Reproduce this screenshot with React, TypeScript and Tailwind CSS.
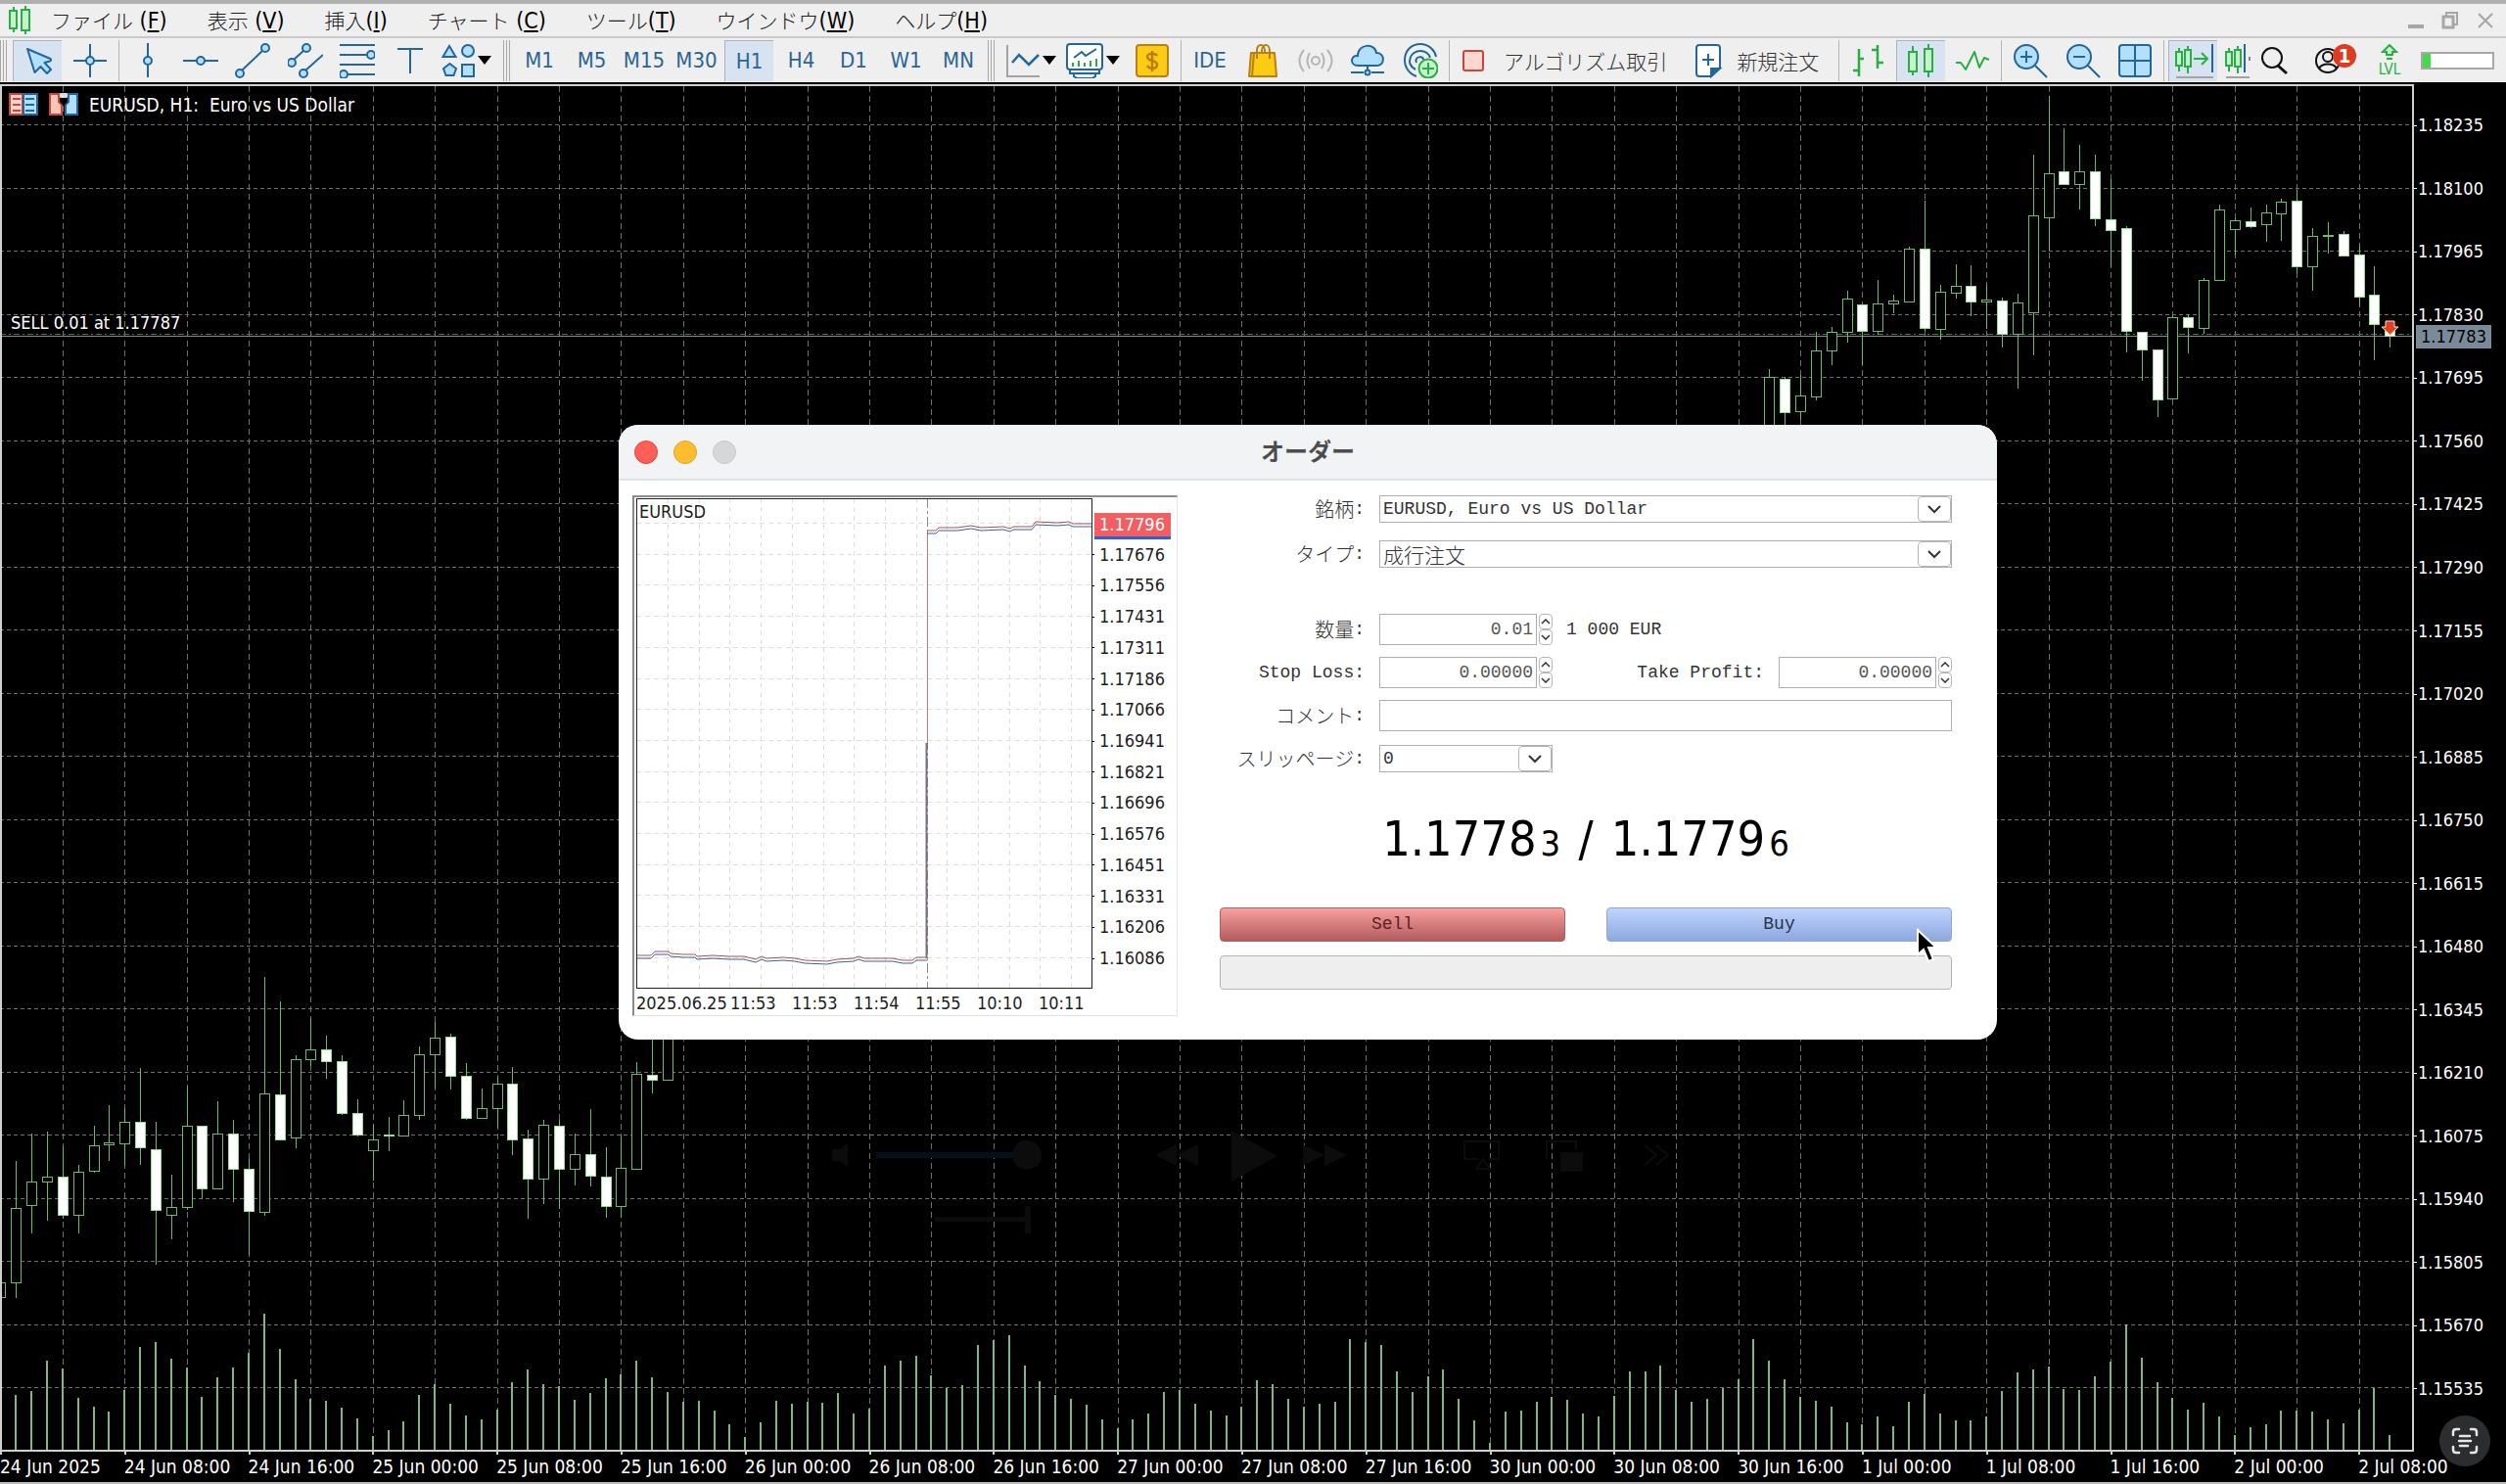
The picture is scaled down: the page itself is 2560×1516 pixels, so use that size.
import React, { useId, useState } from "react";

const UI = "font-['DejaVu_Sans_Condensed','Noto_Sans','Noto_Sans_CJK_JP',sans-serif]";
const JP = "font-['Noto_Sans_CJK_JP',sans-serif] font-light";
const MONO = "font-['Liberation_Mono','Noto_Sans_CJK_JP',monospace]";

const BLUE = "#22679c";
const SKY = "#b2e0fb";
const GREEN = "#27ae45";
const MINT = "#c5f2cb";

/* ---------- chart data: [bar, high, body top, body bottom, low, filled] ---------- */
const CANDLES: number[][] = [
  [0, 1310, 1310, 1325, 1325, 0], [1, 1186, 1234, 1310, 1326, 0], [2, 1158, 1207, 1231, 1260, 0],
  [3, 1156, 1202, 1207, 1247, 0], [4, 1171, 1202, 1241, 1245, 1], [5, 1190, 1197, 1241, 1260, 0],
  [6, 1150, 1170, 1196, 1198, 0], [7, 1129, 1167, 1169, 1186, 0], [8, 1132, 1146, 1168, 1191, 0],
  [9, 1091, 1146, 1172, 1190, 1], [10, 1146, 1174, 1236, 1292, 1], [11, 1200, 1233, 1241, 1266, 0],
  [12, 1110, 1150, 1233, 1236, 0], [13, 1150, 1150, 1214, 1225, 1], [14, 1125, 1158, 1214, 1214, 0],
  [15, 1144, 1158, 1194, 1228, 1], [16, 1184, 1194, 1237, 1282, 1], [17, 998, 1117, 1238, 1242, 0],
  [18, 1023, 1118, 1164, 1165, 1], [19, 1078, 1082, 1162, 1173, 0], [20, 1040, 1072, 1082, 1089, 0],
  [21, 1058, 1072, 1084, 1102, 1], [22, 1078, 1084, 1137, 1139, 1], [23, 1123, 1137, 1159, 1161, 1],
  [24, 1149, 1164, 1175, 1206, 0], [25, 1141, 1159, 1160, 1176, 1], [26, 1124, 1139, 1160, 1160, 0],
  [27, 1069, 1077, 1139, 1144, 0], [28, 1044, 1060, 1077, 1112, 0], [29, 1056, 1059, 1099, 1113, 1],
  [30, 1086, 1099, 1142, 1144, 1], [31, 1112, 1132, 1142, 1142, 0], [32, 1100, 1107, 1132, 1152, 0],
  [33, 1090, 1107, 1164, 1180, 1], [34, 1154, 1163, 1204, 1245, 1], [35, 1144, 1149, 1204, 1230, 0],
  [36, 1144, 1150, 1194, 1235, 1], [37, 1158, 1179, 1194, 1211, 0], [38, 1133, 1179, 1201, 1212, 1],
  [39, 1172, 1202, 1232, 1244, 1], [40, 1161, 1193, 1232, 1244, 0], [41, 1085, 1097, 1194, 1194, 0],
  [42, 1040, 1098, 1103, 1117, 1], [43, 1040, 1040, 1103, 1103, 0],
  [114, 377, 385, 460, 460, 0], [115, 385, 387, 421, 434, 1], [116, 383, 404, 420, 429, 0],
  [117, 339, 358, 405, 409, 0], [118, 334, 339, 358, 373, 0], [119, 297, 305, 339, 350, 0],
  [120, 310, 311, 338, 373, 1], [121, 286, 310, 338, 342, 0], [122, 301, 307, 310, 320, 0],
  [123, 252, 254, 308, 308, 0], [124, 205, 254, 335, 338, 1], [125, 291, 298, 336, 347, 0],
  [126, 270, 292, 299, 305, 0], [127, 271, 292, 308, 323, 1], [128, 291, 306, 308, 336, 0],
  [129, 304, 307, 341, 355, 1], [130, 300, 309, 341, 397, 0], [131, 158, 220, 319, 363, 0],
  [132, 98, 177, 222, 256, 0], [133, 131, 175, 188, 189, 1], [134, 148, 175, 188, 214, 0],
  [135, 158, 175, 223, 231, 1], [136, 183, 224, 235, 273, 1], [137, 231, 233, 338, 360, 1],
  [138, 339, 339, 357, 389, 1], [139, 357, 357, 408, 426, 1], [140, 322, 324, 407, 407, 0],
  [141, 321, 324, 334, 361, 1], [142, 284, 286, 335, 341, 0], [143, 209, 214, 286, 286, 0],
  [144, 223, 225, 234, 261, 0], [145, 212, 226, 231, 233, 1], [146, 209, 217, 229, 247, 0],
  [147, 203, 206, 218, 246, 0], [148, 194, 205, 272, 279, 1], [149, 233, 241, 272, 297, 0],
  [150, 227, 240, 241, 259, 0], [151, 236, 239, 261, 261, 1], [152, 250, 260, 303, 313, 1],
  [153, 272, 301, 331, 368, 1], [154, 333, 333, 343, 355, 1],
];

/* top of each volume bar, starting with bar 1 */
const VOLUMES = [
  1425, 1421, 1390, 1398, 1428, 1437, 1442, 1420, 1376, 1371, 1388, 1397, 1427, 1407, 1397, 1382, 1342, 1378, 1409, 1429,
  1431, 1438, 1449, 1467, 1461, 1452, 1425, 1414, 1434, 1446, 1450, 1440, 1412, 1399, 1414, 1416, 1430, 1423, 1408, 1404,
  1390, 1407, 1422, 1432, 1431, 1441, 1455, 1468, 1453, 1431, 1434, 1432, 1433, 1423, 1444, 1439, 1395, 1390, 1385, 1405,
  1418, 1415, 1374, 1369, 1364, 1395, 1411, 1425, 1429, 1435, 1450, 1459, 1450, 1444, 1422, 1420, 1434, 1441, 1446, 1437,
  1410, 1414, 1429, 1437, 1434, 1432, 1368, 1371, 1374, 1401, 1422, 1406, 1399, 1429, 1451, 1474, 1442, 1441, 1432, 1427,
  1430, 1444, 1447, 1426, 1401, 1401, 1395, 1420, 1432, 1429, 1418, 1409, 1368, 1390, 1409, 1427, 1431, 1437, 1453, 1455,
  1447, 1457, 1432, 1424, 1444, 1451, 1451, 1447, 1421, 1402, 1399, 1396, 1419, 1420, 1406, 1391, 1353, 1387, 1412, 1428,
  1440, 1433, 1447, 1466, 1458, 1455, 1441, 1441, 1442, 1450, 1454, 1440, 1418, 1466,
];

const TIMES = [
  "24 Jun 2025", "24 Jun 08:00", "24 Jun 16:00", "25 Jun 00:00", "25 Jun 08:00", "25 Jun 16:00", "26 Jun 00:00",
  "26 Jun 08:00", "26 Jun 16:00", "27 Jun 00:00", "27 Jun 08:00", "27 Jun 16:00", "30 Jun 00:00", "30 Jun 08:00",
  "30 Jun 16:00", "1 Jul 00:00", "1 Jul 08:00", "1 Jul 16:00", "2 Jul 00:00", "2 Jul 08:00",
];

const PRICES = Array.from({ length: 21 }, (_, i) => ((118235 - i * 135) / 100000).toFixed(5));

const TICK_PRICES = [
  "1.17676", "1.17556", "1.17431", "1.17311", "1.17186", "1.17066", "1.16941",
  "1.16821", "1.16696", "1.16576", "1.16451", "1.16331", "1.16206", "1.16086",
];

const barX = (i: number) => Math.round(0.4 + 15.85 * i);

/* ---------- icons ---------- */
function Icon({ children, w = 36, color = BLUE }: { children: React.ReactNode; w?: number; color?: string }) {
  return (
    <svg width={w} height={36} viewBox={`0 0 ${w} 36`} fill="none" stroke={color} strokeWidth={2} className="shrink-0" aria-hidden="true">
      {children}
    </svg>
  );
}

const Caret = () => (
  <svg width={14} height={9} viewBox="0 0 14 9" className="shrink-0" aria-hidden="true">
    <path d="M0 0H14L7 9Z" fill="#000" />
  </svg>
);

const CursorIcon = () => (
  <Icon><path d="M7 6L30.500 16Q32 17.500 30 18.500L24.500 20L31 27L27 31L20.500 24L14.500 30Z" fill={SKY} strokeLinejoin="round" /></Icon>
);
const CrossIcon = () => (
  <Icon><path d="M18 1V14M18 22V35M1 18H14M22 18H35" /><circle cx="18" cy="18" r="4" fill={SKY} /></Icon>
);
const VLineIcon = () => (
  <Icon><path d="M18 0V14M18 22V35" /><circle cx="18" cy="18" r="4" fill={SKY} /></Icon>
);
const HLineIcon = () => (
  <Icon><path d="M0 18H14M22 18H36" /><circle cx="18" cy="18" r="4" fill={SKY} /></Icon>
);
const TrendIcon = () => (
  <Icon><path d="M7 28L29 7" /><circle cx="31" cy="5" r="4" fill={SKY} /><circle cx="5" cy="31" r="4" fill={SKY} /></Icon>
);
const ChannelIcon = () => (
  <Icon>
    <path d="M6 17L17 7M18 28L36 12" /><circle cx="19" cy="5" r="4" fill={SKY} />
    <circle cx="4" cy="20" r="4" fill={SKY} /><circle cx="16" cy="31" r="4" fill={SKY} />
  </Icon>
);
const FiboIcon = () => (
  <Icon>
    <path d="M0 2H36M0 12H28M0 22H36M8 32H36" /><circle cx="32" cy="12" r="4" fill={SKY} /><circle cx="4" cy="32" r="4" fill={SKY} />
  </Icon>
);
const TextIcon = () => <Icon><path d="M5 6H31M18 6V31" /></Icon>;
const ShapesIcon = () => (
  <Icon w={34}>
    <path d="M8 3L14.500 14H1.500Z" fill={SKY} /><circle cx="27" cy="8" r="6" fill={SKY} />
    <path d="M8.500 21L15 26L12.500 33H4.500L2 26Z" fill={SKY} /><rect x="21" y="22" width="12" height="12" fill={SKY} />
  </Icon>
);
const AxesIcon = () => (
  <Icon w={34}><path d="M1 2V34H34" stroke="#a3a3a3" /><path d="M6 20L13 12L23 22L33 12" strokeWidth={2.500} /></Icon>
);
const IndicatorIcon = () => (
  <Icon w={38}>
    <path d="M4 28V31H34V28M8 31V34L11 36H27L30 34V31" />
    <rect x="1" y="1" width="36" height="26" rx="3" fill="#fff" />
    <path d="M8 15L16 9L20 13L31 6" /><path d="M7 24V20M13 24V18M19 24V20M25 24V18M31 24V16" stroke={GREEN} />
  </Icon>
);
const DollarIcon = () => (
  <Icon w={34} color="#b97f10">
    <rect x="1" y="2" width="32" height="32" rx="3" fill="#fccb13" />
    <path d="M22 13C20 10 12 10 12 14C12 19 22 17 22 22C22 27 14 27 12 23M17 8V29" strokeWidth={2.500} />
  </Icon>
);
const BagIcon = () => (
  <Icon color="#b97f10">
    <path d="M6 10H30L32 34H4Z" fill="#fccb13" strokeLinejoin="round" />
    <path d="M9 10L7 34M12 16V8C12 0 20 0 20 8V10M17 10V8C17 0 25 0 25 8V16" />
  </Icon>
);
const SignalIcon = () => (
  <Icon color="#b5b5b5">
    <circle cx="18" cy="18" r="4" /><path d="M12 10Q7 18 12 26M24 10Q29 18 24 26M6 7Q-3 18 6 29M30 7Q39 18 30 29" />
  </Icon>
);
const CloudIcon = () => (
  <Icon>
    <path d="M8 23C0 23 0 12 8 13C8 0 26 0 27 10C36 10 36 23 28 23Z" fill={SKY} /><path d="M18 23V28M1 30H14M22 30H35" />
    <circle cx="18" cy="30" r="2.500" fill={SKY} />
  </Icon>
);
const RadarIcon = () => (
  <Icon>
    <path d="M14 34C-4 28 -1 1 18 1C27 1 33 8 34 14M13 27C2 21 8 8 18 8C23 8 27 11 28 15M14 20C11 14 21 12 21 17" />
    <circle cx="26" cy="26" r="9.500" fill={MINT} stroke={GREEN} /><path d="M26 20V32M20 26H32" stroke={GREEN} />
  </Icon>
);
const StopIcon = () => <Icon w={24} color="#c8463c"><rect x="2" y="8" width="20" height="20" rx="2" fill="#fcd8cf" /></Icon>;
const NewOrderIcon = () => (
  <Icon w={28}>
    <path d="M5 2H23Q26 2 26 5V25L17 34H5Q2 34 2 31V5Q2 2 5 2Z" fill="#fff" /><path d="M17 34V26H26Z" fill={BLUE} />
    <path d="M14 11V23M8 17H20" />
  </Icon>
);
const BarsIcon = () => <Icon color={GREEN}><path d="M9 6V34M3 28H9M9 16H14M28 2V26M22 7H28M28 20H34" strokeWidth={2.500} /></Icon>;
const CandlesIcon = () => (
  <Icon color={GREEN}>
    <path d="M10 3V33M26 1V35" /><rect x="6" y="9" width="8" height="20" fill={MINT} /><rect x="22" y="6" width="8" height="23" fill={MINT} />
  </Icon>
);
const WaveIcon = () => <Icon color={GREEN}><path d="M1 20H6L11 27L20 9L25 25L30 15L35 17" strokeLinejoin="round" /></Icon>;
const ZoomIcon = ({ plus }: { plus?: boolean }) => (
  <Icon><circle cx="14" cy="14" r="12" fill={SKY} /><path d={plus ? "M14 8V20M8 14H20M23 23L35 35" : "M8 14H20M23 23L35 35"} /></Icon>
);
const GridIcon = () => (
  <Icon><rect x="2" y="2" width="32" height="32" rx="3" fill={SKY} /><path d="M18 2V34M2 18H34" /></Icon>
);
const ShiftIcon = () => (
  <Icon w={42} color={GREEN}>
    <path d="M6 5V29M15 3V31M21 16H34M29 10L35 16L29 22" /><rect x="3" y="9" width="6" height="14" fill={MINT} />
    <rect x="12" y="7" width="6" height="17" fill={MINT} /><path d="M40 1V30" stroke={BLUE} /><path d="M3 35H41" stroke="#a3a3a3" />
  </Icon>
);
const AutoScrollIcon = () => (
  <Icon w={28} color={GREEN}>
    <path d="M6 5V29M15 3V31" /><rect x="3" y="9" width="6" height="14" fill={MINT} /><rect x="12" y="7" width="6" height="17" fill={MINT} />
    <path d="M22 1V30" stroke={BLUE} /><path d="M27 14V18" stroke="#888" /><path d="M3 35H27" stroke="#a3a3a3" />
  </Icon>
);
const SearchIcon = () => <Icon w={30} color="#111"><circle cx="13" cy="15" r="10" /><path d="M19 23L28 31" strokeWidth={3} /></Icon>;
const PersonIcon = () => (
  <Icon w={46} color="#111">
    <circle cx="15" cy="18" r="12" /><circle cx="15" cy="14" r="5" /><path d="M6 26C9 20 21 20 24 26" />
    <circle cx="32" cy="13" r="12" fill="#de3b21" stroke="none" />
  </Icon>
);
const LevelIcon = () => (
  <svg width={24} height={18} viewBox="0 0 24 18" fill="none" stroke={GREEN} strokeWidth={2} aria-hidden="true">
    <path d="M12 1L19 8H15V11H9V8H5ZM9 15H15" fill={MINT} />
  </svg>
);

/* ---------- toolbar ---------- */
function Tool({ label, active, children, w = "w-[50px]" }: { label: string; active?: boolean; children: React.ReactNode; w?: string }) {
  return (
    <button
      type="button"
      aria-label={label}
      className={`${w} flex h-[42px] shrink-0 items-center justify-center overflow-hidden ${active ? "border-l border-t border-[#a9b3bd] bg-[#d7e3f0]" : ""}`}
    >
      {children}
    </button>
  );
}
const Sep = () => <div className="h-[42px] w-px shrink-0 bg-[#b4b4b4]" />;
const Grip = () => <div className="h-[42px] w-[7px] shrink-0 border-x border-[#a8a8a8] px-[2px]"><div className="h-full w-px bg-[#a8a8a8]" /></div>;

const MENUS = [
  ["ファイル", "F", " "], ["表示", "V", " "], ["挿入", "I", ""], ["チャート", "C", " "], ["ツール", "T", ""], ["ウインドウ", "W", ""], ["ヘルプ", "H", ""],
];

function MenuBar() {
  return (
    <nav className="flex h-[33px] items-center bg-[#efefef] pl-2 pr-3">
      <svg width={24} height={30} viewBox="0 0 24 30" fill={MINT} stroke={GREEN} strokeWidth={2} aria-hidden="true">
        <path d="M6 1V27M18 0V29" /><rect x="2" y="5" width="7" height="18" /><rect x="14" y="4" width="8" height="21" />
      </svg>
      <ul className="ml-5 flex items-center gap-[41px]">
        {MENUS.map(([jp, key, gap]) => (
          <li key={key}>
            <a href="#" className="flex items-baseline whitespace-pre leading-8 text-black">
              <span className={`${JP} text-[21px] text-[#222]`}>{jp}</span>
              <span className={`${UI} text-[23px]`}>{gap}(<u className="underline-offset-2">{key}</u>)</span>
            </a>
          </li>
        ))}
      </ul>
      <div className="ml-auto flex items-center gap-[18px]">
        <button type="button" aria-label="最小化" className="mt-3 h-1 w-4 bg-[#a6a6a6]" />
        <button type="button" aria-label="元に戻す">
          <svg width={18} height={18} viewBox="0 0 18 18" fill="none" stroke="#a6a6a6" strokeWidth={2}><path d="M5 4V1H16V13H13" /><rect x="2" y="5" width="10" height="11" strokeWidth={3} /></svg>
        </button>
        <button type="button" aria-label="閉じる">
          <svg width={18} height={18} viewBox="0 0 18 18" stroke="#a6a6a6" strokeWidth={2}><path d="M2 2L16 16M16 2L2 16" /></svg>
        </button>
      </div>
    </nav>
  );
}

function Toolbar() {
  return (
    <div className={`${UI} flex h-[47px] items-center border-t-2 border-[#c9c9c9] bg-[#efefef] pr-3 text-[22px] text-[#2a6595]`}>
      <Grip />
      <div className="ml-[6px] mr-1 flex w-[104px] shrink-0 justify-between">
        <Tool label="カーソル" active><CursorIcon /></Tool>
        <Tool label="十字線"><CrossIcon /></Tool>
      </div>
      <Sep />
      <div className="ml-1 flex w-[318px] shrink-0 justify-between">
        <Tool label="垂直線"><VLineIcon /></Tool>
        <Tool label="水平線"><HLineIcon /></Tool>
        <Tool label="トレンドライン"><TrendIcon /></Tool>
        <Tool label="チャネル"><ChannelIcon /></Tool>
        <Tool label="フィボナッチ"><FiboIcon /></Tool>
        <Tool label="テキスト"><TextIcon /></Tool>
      </div>
      <button type="button" aria-label="図形" className="ml-[7px] mr-3 flex shrink-0 items-center gap-[3px]"><ShapesIcon /><Caret /></button>
      <Grip />
      <div className="mx-[5px] flex w-[478px] shrink-0 justify-between">
        {["M1", "M5", "M15", "M30", "H1", "H4", "D1", "W1", "MN"].map((t) => (
          <Tool key={t} label={t} active={t === "H1"}>{t}</Tool>
        ))}
      </div>
      <Grip />
      <button type="button" aria-label="チャート種類" className="ml-3 flex shrink-0 items-center gap-[3px]"><AxesIcon /><Caret /></button>
      <button type="button" aria-label="インディケータ" className="ml-[10px] flex shrink-0 items-center gap-[3px]"><IndicatorIcon /><Caret /></button>
      <button type="button" aria-label="取引" className="ml-4 mr-3 shrink-0"><DollarIcon /></button>
      <Sep />
      <div className="mx-1 flex w-[265px] shrink-0 justify-between">
        <Tool label="IDE">IDE</Tool>
        <Tool label="マーケット"><BagIcon /></Tool>
        <Tool label="シグナル"><SignalIcon /></Tool>
        <Tool label="VPS"><CloudIcon /></Tool>
        <Tool label="コミュニティ"><RadarIcon /></Tool>
      </div>
      <Sep />
      <button type="button" className={`${JP} ml-3 flex shrink-0 items-center gap-[19px] whitespace-nowrap text-[21px] leading-8 text-[#333]`}>
        <StopIcon />アルゴリズム取引
      </button>
      <button type="button" className={`${JP} ml-7 mr-5 flex shrink-0 items-center gap-[15px] whitespace-nowrap text-[21px] leading-8 text-[#333]`}>
        <NewOrderIcon />新規注文
      </button>
      <Sep />
      <div className="mx-1 flex w-[157px] shrink-0 justify-between">
        <Tool label="バー"><BarsIcon /></Tool>
        <Tool label="ローソク足" active><CandlesIcon /></Tool>
        <Tool label="ライン"><WaveIcon /></Tool>
      </div>
      <Sep />
      <div className="mx-1 flex w-[157px] shrink-0 justify-between">
        <Tool label="拡大"><ZoomIcon plus /></Tool>
        <Tool label="縮小"><ZoomIcon /></Tool>
        <Tool label="並べる"><GridIcon /></Tool>
      </div>
      <Sep />
      <div className="ml-1 flex shrink-0 gap-[5px]">
        <Tool label="チャートシフト" active><ShiftIcon /></Tool>
        <Tool label="自動スクロール" w="w-[30px]"><AutoScrollIcon /></Tool>
      </div>
      <button type="button" aria-label="検索" className="ml-2 shrink-0"><SearchIcon /></button>
      <div className="ml-auto flex shrink-0 items-center gap-5">
        <button type="button" aria-label="アカウント" className="relative">
          <PersonIcon />
          <span className="absolute right-[2px] top-0 flex h-[26px] w-6 items-center justify-center text-[20px] font-bold text-white">1</span>
        </button>
        <button type="button" className="flex flex-col items-center text-[15px] leading-4 text-[#27ae45]"><LevelIcon />LVL</button>
        <div role="img" aria-label="接続状態" className="h-[18px] w-[75px] border-2 border-[#a8a8a8] bg-white"><div className="h-full w-2 bg-[#46d94a]" /></div>
      </div>
    </div>
  );
}

/* ---------- main chart ---------- */
function Plot() {
  return (
    <svg viewBox="0 86 2466 1397" preserveAspectRatio="none" className="h-full min-w-0 flex-1" shapeRendering="crispEdges" role="img" aria-label="EURUSD H1">
      <g stroke="#6f6f6f" strokeWidth={1}>
        {PRICES.map((p, i) => (
          <line key={p} x1={0} x2={2466} y1={Math.round(127 + i * 64.5) + 0.5} y2={Math.round(127 + i * 64.5) + 0.5} strokeDasharray="4 3" />
        ))}
        {Array.from({ length: 38 }, (_, i) => barX((i + 1) * 4) + 0.5).map((x) => (
          <line key={x} x1={x} x2={x} y1={88} y2={1482} strokeDasharray="6 4" />
        ))}
      </g>
      <g fill="#0c0c0c" shapeRendering="auto">
        <path d="M850 1174H858L866 1168V1192L858 1186H850Z" />
        <rect x="895" y="1177" width="145" height="6" fill="#04101a" />
        <circle cx="1049" cy="1180" r="15" />
        <path d="M1180 1180L1202 1169V1191ZM1202 1180L1224 1169V1191ZM1258 1155L1305 1181L1258 1207ZM1331 1169L1353 1180L1331 1191ZM1353 1169L1376 1180L1353 1191Z" />
        <path d="M1594 1177H1617V1197H1594Z" />
        <path d="M1510 1184H1496V1166H1531V1184H1520M1515 1184L1508 1194H1522ZM1580 1184V1166H1610V1174M1680 1170L1692 1180L1680 1190M1692 1170L1704 1180L1692 1190" fill="none" stroke="#0c0c0c" strokeWidth={2} />
        <rect x="955" y="1243" width="95" height="5" /><rect x="1047" y="1232" width="6" height="28" />
      </g>
      <g fill="#7fb587">
        {VOLUMES.map((y, i) => <rect key={i} x={barX(i + 1) - 1} y={y} width={2} height={1482 - y} />)}
      </g>
      <line x1={0} x2={2466} y1={341.5} y2={341.5} stroke="#3d7a45" strokeDasharray="6 3 2 3" />
      <line x1={0} x2={2466} y1={343} y2={343} stroke="#7e8b8f" strokeWidth={1} />
      {CANDLES.map(([i, hi, top, bot, lo, filled]) => {
        const x = barX(i);
        return (
          <g key={i} stroke="#67bd68" strokeWidth={1}>
            <path d={`M${x + 0.5} ${hi}V${top}M${x + 0.5} ${bot}V${lo}`} />
            <rect x={x - 4.5} y={top + 0.5} width={10} height={Math.max(bot - top, 1)} fill={filled ? "#fff" : "#000"} stroke={filled ? "#8fe08f" : "#67bd68"} />
          </g>
        );
      })}
      <path d="M2437 328H2446V334H2450L2441.500 342L2433 334H2437Z" fill="#e0401f" stroke="#ffd9c9" shapeRendering="auto" />
      <path d="M0 87H2465V1482H0M1 87V1482" fill="none" stroke="#d0d0d0" strokeWidth={2} />
    </svg>
  );
}

function ChartWindow() {
  return (
    <section className={`${UI} relative flex min-h-0 flex-1 flex-col border-b-2 border-[#bdbdbd] bg-black pt-[2px] text-[18px] leading-6 text-white`}>
      <div className="flex min-h-0 flex-1">
        <Plot />
        <ol className="relative flex w-[94px] shrink-0 flex-col pb-8 pt-[10px]">
          {PRICES.map((p) => (
            <li key={p} className="flex flex-1 items-center"><span className="mr-px h-px w-[3px] bg-white" />{p}</li>
          ))}
          <li className="absolute left-[2px] top-[246px] w-[77px] bg-[#7b8a99] text-center text-black">1.17783</li>
        </ol>
      </div>
      <ol className="flex h-[31px] shrink-0 pr-6 text-[19px]">
        {TIMES.map((t) => (
          <li key={t} className="min-w-0 flex-1 basis-0 whitespace-nowrap"><div className="h-[3px] w-[2px] bg-[#d0d0d0]" />{t}</li>
        ))}
      </ol>
      <header className="absolute left-[9px] top-[11px] flex items-center gap-[11px] whitespace-pre">
        <svg width={30} height={24} viewBox="0 0 30 24" aria-hidden="true">
          <rect x="1" y="1" width="13" height="21" fill="#fbd5cd" stroke="#c8463c" strokeWidth="2" /><rect x="15" y="1" width="14" height="21" fill={SKY} stroke={BLUE} strokeWidth="2" />
          <path d="M4 6H12M4 12H12M4 18H12" stroke="#c8463c" strokeWidth="2" /><path d="M17 6H26M17 12H26M17 18H26" stroke={BLUE} strokeWidth="2" />
        </svg>
        <svg width={30} height={24} viewBox="0 0 30 24" aria-hidden="true">
          <path d="M1 1H10V9L13 12V22H1Z" fill="#fbc5ba" stroke="#c8463c" strokeWidth="2" /><path d="M29 1H20V9L17 12V22H29Z" fill={SKY} stroke={BLUE} strokeWidth="2" />
          <path d="M11 0H19V9L15 13L11 9Z" fill="#000" /><rect x="11" y="0" width="8" height="5" rx="1" fill="#ddd" />
        </svg>
        <h1 className="text-[19px]">EURUSD, H1:  Euro vs US Dollar</h1>
      </header>
      <p className="absolute left-[11px] top-[234px]">SELL 0.01 at 1.17787</p>
      <button type="button" aria-label="テキスト認識" className="absolute bottom-[16px] right-[16px] flex h-[52px] w-[52px] items-center justify-center rounded-full bg-[#2b2d2e]">
        <svg width={28} height={28} viewBox="0 0 28 28" fill="none" stroke="#e6e6e6" strokeWidth={2.500} strokeLinecap="round">
          <path d="M2 8V5Q2 2 5 2H8M20 2H23Q26 2 26 5V8M26 20V23Q26 26 23 26H20M8 26H5Q2 26 2 23V20M9 9H19M8 14H20M9 19H17" />
        </svg>
      </button>
    </section>
  );
}

/* ---------- order window ---------- */
const LOW = [[0, 467], [15, 467], [19, 463], [33, 463], [35, 465], [48, 466], [60, 466], [62, 468], [78, 467], [95, 468], [110, 468], [118, 470], [122, 471], [128, 468], [133, 470], [150, 469], [162, 470], [172, 472], [195, 473], [205, 471], [222, 470], [227, 468], [233, 470], [262, 470], [272, 472], [282, 472], [286, 469], [297, 469]];
const HIGH = [[297, 33], [306, 33], [309, 30], [328, 30], [342, 28], [352, 30], [375, 29], [382, 31], [385, 29], [404, 29], [408, 24], [430, 25], [442, 24], [446, 26], [465, 26]];
const pts = (a: number[][], dy: number) => a.map(([x, y]) => `${x},${y + dy}`).join(" ");

function TickPlot() {
  return (
    <svg width={466} height={501} viewBox="0 0 466 501" fill="none" className="shrink-0" role="img" aria-label="EURUSD">
      <rect width={466} height={501} fill="#fff" />
      <g stroke="#dedede" strokeDasharray="5 4" shapeRendering="crispEdges">
        {Array.from({ length: 15 }, (_, i) => Math.round(25 + i * 31.7) + 0.5).map((y) => <line key={y} x1={0} x2={466} y1={y} y2={y} />)}
        {Array.from({ length: 14 }, (_, i) => Math.round(32 + i * 31.7) + 0.5).map((x) => <line key={x} x1={x} x2={x} y1={0} y2={501} />)}
      </g>
      <path d="M297.500 0V501" stroke="#8a8a8a" strokeDasharray="10 3 3 3" />
      <polyline points={pts(LOW, 3)} stroke="#3f5f9f" />
      <polyline points={pts(LOW, 0)} stroke="#a8524e" />
      <path d="M296.500 470V250" stroke="#7d6f7b" strokeWidth={2} />
      <path d="M297.500 250V33" stroke="#d9706a" />
      <polyline points={pts(HIGH, 3)} stroke="#3f5f9f" />
      <polyline points={pts(HIGH, 0)} stroke="#a8524e" />
      <rect x={0.5} y={0.5} width={465} height={500} stroke="#222" />
    </svg>
  );
}

function TickChart() {
  return (
    <div className={`${UI} relative ml-[14px] mt-[15px] h-[532px] w-[557px] shrink-0 border-b border-l-2 border-r border-t-2 border-b-[#e3e3e3] border-l-[#8c8c8c] border-r-[#e3e3e3] border-t-[#8c8c8c] pl-[2px] pt-px text-[18px] leading-6 text-[#1c1c1c]`}>
      <div className="flex">
        <TickPlot />
        <ol className="flex h-[501px] flex-1 flex-col pb-[15px] pt-[10px]">
          <li className="flex flex-1 items-end"><span className="ml-[2px] border-b-[3px] border-[#2f5fe0] bg-[#f25f62] pl-[5px] pr-[6px] text-white">1.17796</span></li>
          {TICK_PRICES.map((p) => (
            <li key={p} className="flex flex-1 items-center"><span className="mr-[5px] h-px w-[2px] bg-black" />{p}</li>
          ))}
        </ol>
      </div>
      <ol className="mt-[3px] flex">
        <li className="w-[96px] shrink-0">2025.06.25</li>
        {["11:53", "11:53", "11:54", "11:55", "10:10", "10:11"].map((t, i) => <li key={i} className="w-[63px] shrink-0">{t}</li>)}
      </ol>
      <p className="absolute left-[5px] top-[3px]">EURUSD</p>
    </div>
  );
}

function Combo({ id, value, jp, w }: { id: string; value: string; jp?: boolean; w: string }) {
  return (
    <div className={`relative ${w}`}>
      <select id={id} defaultValue={value} className={`${jp ? `${JP} text-[21px]` : `${MONO} text-[18px]`} block h-7 w-full appearance-none border border-[#aeaeae] bg-white pl-[3px] leading-6 text-[#333]`}>
        <option>{value}</option>
      </select>
      <span className="pointer-events-none absolute bottom-px right-px top-px flex w-[34px] items-center justify-center rounded-sm border border-[#b5b5b5] bg-white">
        <svg width={14} height={9} viewBox="0 0 14 9" fill="none" stroke="#333" strokeWidth={2}><path d="M1 1L7 7L13 1" /></svg>
      </span>
    </div>
  );
}

function Spin({ id, value }: { id: string; value: string }) {
  const [v, setV] = useState(value);
  return (
    <div className="flex w-[177px] gap-[2px]">
      <input id={id} value={v} onChange={(e) => setV(e.target.value)} className={`${MONO} h-8 w-[161px] border border-[#aeaeae] bg-white pr-[3px] text-right text-[18px] text-[#555]`} />
      <span className="flex w-[14px] flex-col">
        {["M1 5L5 1L9 5", "M1 1L5 5L9 1"].map((d, i) => (
          <button key={d} type="button" aria-label={i ? "減らす" : "増やす"} className="flex flex-1 items-center justify-center rounded-sm border border-[#b5b5b5]">
            <svg width={10} height={6} viewBox="0 0 10 6" fill="none" stroke="#333" strokeWidth={1.500}><path d={d} /></svg>
          </button>
        ))}
      </span>
    </div>
  );
}

function Row({ id, label, jp, className, children }: { id: string; label: string; jp?: boolean; className?: string; children: React.ReactNode }) {
  return (
    <div className={`flex items-center ${className ?? ""}`}>
      <label htmlFor={id} className={`mr-[15px] flex w-[148px] shrink-0 justify-end whitespace-nowrap text-[#333] ${MONO} text-[18px] leading-6`}>
        {jp ? <span className={`${JP} text-[20px]`}>{label}</span> : label}:
      </label>
      {children}
    </div>
  );
}

function OrderWindow() {
  const id = useId();
  return (
    <div role="dialog" aria-label="オーダー" className="absolute left-[632px] top-[434px] flex h-[628px] w-[1408px] flex-col overflow-hidden rounded-[20px] bg-white">
      <header className="relative flex h-[57px] shrink-0 items-center justify-center border-b-2 border-[#dfe2e3] bg-[#f1f3f4]">
        <div className="absolute left-4 flex gap-4">
          <button type="button" aria-label="閉じる" className="h-6 w-6 rounded-full border border-[#e0443e] bg-[#fe5f57]" />
          <button type="button" aria-label="最小化" className="h-6 w-6 rounded-full border border-[#dea123] bg-[#febc2e]" />
          <button type="button" aria-label="拡大" disabled className="h-6 w-6 rounded-full border border-[#c6c7c9] bg-[#d6d7d9]" />
        </div>
        <h2 className="pb-[3px] font-['Noto_Sans_CJK_JP',sans-serif] text-[24px] font-bold leading-8 text-[#4b4c4e]">オーダー</h2>
      </header>
      <div className="flex flex-1">
        <TickChart />
        <form className="ml-[43px] mr-[46px] flex flex-1 flex-col pt-[15px]" onSubmit={(e) => e.preventDefault()}>
          <Row id={`${id}s`} label="銘柄" jp><Combo id={`${id}s`} value="EURUSD, Euro vs US Dollar" w="flex-1" /></Row>
          <Row id={`${id}t`} label="タイプ" jp className="mt-[18px]"><Combo id={`${id}t`} value="成行注文" jp w="flex-1" /></Row>
          <Row id={`${id}v`} label="数量" jp className="mt-[47px]">
            <Spin id={`${id}v`} value="0.01" />
            <span className={`${MONO} ml-[14px] text-[18px] leading-6 text-[#333]`}>1 000 EUR</span>
          </Row>
          <div className="mt-3 flex justify-between">
            <Row id={`${id}l`} label="Stop Loss"><Spin id={`${id}l`} value="0.00000" /></Row>
            <Row id={`${id}p`} label="Take Profit"><Spin id={`${id}p`} value="0.00000" /></Row>
          </div>
          <Row id={`${id}c`} label="コメント" jp className="mt-3">
            <input id={`${id}c`} className={`${MONO} h-8 flex-1 border border-[#aeaeae] bg-white px-1 text-[18px]`} />
          </Row>
          <Row id={`${id}d`} label="スリッページ" jp className="mt-[14px]"><Combo id={`${id}d`} value="0" w="w-[177px]" /></Row>
          <p className={`${UI} mt-9 flex items-baseline justify-center whitespace-pre text-[50px] leading-[64px] text-black`}>
            1.1778<span className="ml-[4px] mr-1 text-[36px]">3</span> / <span className="ml-1">1.1779</span><span className="ml-[4px] text-[36px]">6</span>
          </p>
          <div className={`${MONO} mt-[33px] flex gap-[42px] text-[18px]`}>
            <button type="submit" className="h-[35px] flex-1 rounded-sm border border-[#b06060] bg-gradient-to-b from-[#f9a0a0] to-[#b25b5e] text-[#5a2226]">Sell</button>
            <button type="submit" className="h-[35px] flex-1 rounded-sm border border-[#8fa6d6] bg-gradient-to-b from-[#c0d5fd] to-[#8da8df] text-[#2a3350]">Buy</button>
          </div>
          <button type="button" aria-label="決済" disabled className="mt-[14px] h-[35px] rounded-sm border border-[#b5b5b5] bg-[#eeeeee]" />
        </form>
      </div>
      <svg width={24} height={38} viewBox="0 0 24 38" className="pointer-events-none absolute left-[1325px] top-[514px]" aria-hidden="true">
        <path d="M2 2V27L8 22L13 34L18 32L13 20H21Z" fill="#000" stroke="#fff" strokeWidth={2} />
      </svg>
    </div>
  );
}

export default function App() {
  return (
    <div className="relative flex h-screen min-h-[1100px] flex-col overflow-hidden bg-black">
      <div className="h-1 shrink-0 bg-[#b0b0b0]" />
      <MenuBar />
      <Toolbar />
      <ChartWindow />
      <OrderWindow />
    </div>
  );
}
